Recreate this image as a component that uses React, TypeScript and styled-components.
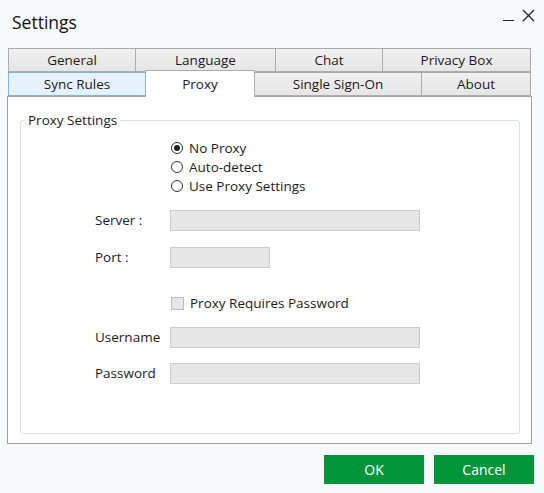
import styled, { createGlobalStyle } from 'styled-components';

const GlobalStyle = createGlobalStyle`
	html, body {
		margin: 0;
		padding: 0;
		background: #f8f9fb;
	}
	* {
		box-sizing: border-box;
	}
`;

const topTabs = [
	{ title: 'General', width: 128 },
	{ title: 'Language', width: 141 },
	{ title: 'Chat', width: 108 },
	{ title: 'Privacy Box', width: 149 },
];

const bottomTabs = [
	{ title: 'Sync Rules', width: 138, state: 'hover' },
	{ title: 'Proxy', width: 110, state: 'active' },
	{ title: 'Single Sign-On', width: 168, state: 'idle' },
	{ title: 'About', width: 110, state: 'idle' },
];

const radios = [
	{ label: 'No Proxy', checked: true },
	{ label: 'Auto-detect', checked: false },
	{ label: 'Use Proxy Settings', checked: false },
];

function App() {
	return (
		<Window>
			<GlobalStyle />
			<TitleBar>
				<Title>Settings</Title>
				<WindowControls>
					<Minimize />
					<svg width='13' height='13' viewBox='0 0 13 13'>
						<path d='M1 1L12 12M12 1L1 12' stroke='#222' strokeWidth='1.3' />
					</svg>
				</WindowControls>
			</TitleBar>

			<TabRow>
				{topTabs.map((t) => (
					<Tab key={t.title} $width={t.width} $state='idle'>
						{t.title}
					</Tab>
				))}
			</TabRow>
			<TabRow>
				{bottomTabs.map((t) => (
					<Tab key={t.title} $width={t.width} $state={t.state}>
						{t.title}
					</Tab>
				))}
			</TabRow>

			<Panel>
				<GroupBox>
					<Legend>Proxy Settings</Legend>
					<Form>
						<Spacer />
						<RadioList>
							{radios.map((r) => (
								<RadioRow key={r.label}>
									<RadioCircle $checked={r.checked} />
									{r.label}
								</RadioRow>
							))}
						</RadioList>

						<FieldLabel $top={15}>Server :</FieldLabel>
						<TextBox $width={250} $top={15} />

						<FieldLabel $top={16}>Port :</FieldLabel>
						<TextBox $width={100} $top={16} />

						<Spacer />
						<CheckRow>
							<CheckBox />
							Proxy Requires Password
						</CheckRow>

						<FieldLabel $top={16}>Username</FieldLabel>
						<TextBox $width={250} $top={16} />

						<FieldLabel $top={15}>Password</FieldLabel>
						<TextBox $width={250} $top={15} />
					</Form>
				</GroupBox>
			</Panel>

			<Footer>
				<ActionButton>OK</ActionButton>
				<ActionButton>Cancel</ActionButton>
			</Footer>
		</Window>
	);
}

const Window = styled.div`
	width: 544px;
	height: 493px;
	background: #f8f9fb;
	font-family: 'Open Sans', 'Noto Sans', sans-serif;
	font-size: 13.5px;
	color: #1b1b1b;
	overflow: hidden;
`;

const TitleBar = styled.div`
	display: flex;
	justify-content: space-between;
	align-items: flex-start;
	height: 48px;
	padding: 9px 9px 0 12px;
`;

const Title = styled.h1`
	margin: 0;
	font-size: 17.5px;
	font-weight: 400;
	line-height: 26px;
	color: #111;
`;

const WindowControls = styled.div`
	display: flex;
	align-items: flex-end;
	gap: 8px;
	height: 13px;
`;

const Minimize = styled.span`
	display: block;
	width: 11px;
	height: 1px;
	background: #222;
	margin-bottom: 1px;
`;

const TabRow = styled.div`
	display: flex;
	height: 24px;
	padding-left: 8px;
	position: relative;
	z-index: 1;
`;

const Tab = styled.div<{ $width: number; $state: string }>`
	width: ${(p) => p.$width}px;
	margin-left: -1px;
	display: flex;
	align-items: center;
	justify-content: center;
	padding-top: 2px;
	border: 1px solid ${(p) => (p.$state === 'hover' ? '#7eb4ea' : '#acacac')};
	background: ${(p) =>
		p.$state === 'hover'
			? '#e5f1fb'
			: p.$state === 'active'
			? '#ffffff'
			: 'linear-gradient(#f0f0f0, #e5e5e5)'};
	line-height: 1;
	white-space: nowrap;

	&:first-child {
		margin-left: 0;
	}

	${(p) =>
		p.$state === 'active' &&
		`
		margin-top: -2px;
		height: 27px;
		border-bottom: none;
		position: relative;
		z-index: 2;
		padding-top: 1px;
	`}
`;

const Panel = styled.div`
	margin: 0 12px 0 7px;
	height: 348px;
	background: #ffffff;
	border: 1px solid #a0a0a0;
	padding: 14px 11px 9px 12px;
`;

const GroupBox = styled.fieldset`
	margin: 0;
	height: 100%;
	border: 1px solid #d8e2e8;
	border-radius: 3px;
	padding: 0;
`;

const Legend = styled.legend`
	margin-left: 4px;
	padding: 0 3px;
	line-height: 18px;
`;

const Form = styled.div`
	display: grid;
	grid-template-columns: 75px 1fr;
	align-items: center;
	padding-left: 74px;
`;

const Spacer = styled.div``;

const RadioList = styled.div`
	display: flex;
	flex-direction: column;
	margin-top: 9px;
`;

const RadioRow = styled.label`
	display: flex;
	align-items: center;
	gap: 6px;
	height: 19px;
	padding-left: 1px;
`;

const RadioCircle = styled.span<{ $checked: boolean }>`
	width: 12px;
	height: 12px;
	border-radius: 50%;
	border: 1px solid #333;
	display: flex;
	align-items: center;
	justify-content: center;

	&::after {
		content: '';
		width: 6px;
		height: 6px;
		border-radius: 50%;
		background: ${(p) => (p.$checked ? '#222' : 'transparent')};
	}
`;

const FieldLabel = styled.div<{ $top: number }>`
	margin-top: ${(p) => p.$top}px;
	height: 21px;
	line-height: 21px;
`;

const TextBox = styled.div<{ $width: number; $top: number }>`
	margin-top: ${(p) => p.$top}px;
	width: ${(p) => p.$width}px;
	height: 21px;
	background: #e6e6e6;
	border: 1px solid #cccccc;
`;

const CheckRow = styled.label`
	display: flex;
	align-items: center;
	gap: 6px;
	margin-top: 27px;
	height: 16px;
	padding-left: 1px;
`;

const CheckBox = styled.span`
	width: 13px;
	height: 13px;
	background: #e6e6e6;
	border: 1px solid #bcbcbc;
`;

const Footer = styled.div`
	display: flex;
	justify-content: flex-end;
	gap: 10px;
	padding: 11px 10px 0 0;
`;

const ActionButton = styled.button`
	width: 100px;
	height: 29px;
	border: none;
	background: #009639;
	color: #ffffff;
	font-family: 'Open Sans', 'Noto Sans', sans-serif;
	font-size: 14px;
	padding: 0;
`;

export default App;
